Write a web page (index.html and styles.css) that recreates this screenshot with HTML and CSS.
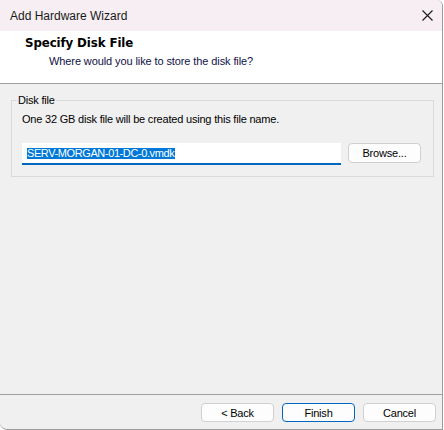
FILE: index.html
```html
<!DOCTYPE html>
<html>
<head>
<meta charset="utf-8">
<link rel="stylesheet" href="styles.css">
</head>
<body>
<div class="window">
  <div class="titlebar">
    <span class="title">Add Hardware Wizard</span>
    <svg class="close" width="11" height="11" viewBox="0 0 11 11"><path d="M0.5 0.5 L10.5 10.5 M10.5 0.5 L0.5 10.5" stroke="#1a1a1a" stroke-width="1.1" fill="none"/></svg>
  </div>
  <div class="header">
    <div class="h-title">Specify Disk File</div>
    <div class="h-sub">Where would you like to store the disk file?</div>
  </div>
  <div class="main">
    <fieldset class="group">
      <legend class="legend">Disk file</legend>
      <div class="desc">One 32 GB disk file will be created using this file name.</div>
      <div class="row">
        <div class="input"><span class="sel">SERV-MORGAN-01-DC-0.vmdk</span></div>
        <button class="btn browse">Browse...</button>
      </div>
    </fieldset>
  </div>
  <div class="footer">
    <button class="btn">&lt; Back</button>
    <button class="btn default">Finish</button>
    <button class="btn">Cancel</button>
  </div>
</div>
</body>
</html>
```

FILE: styles.css
```css
html, body {
  margin: 0;
  padding: 0;
  background: #ffffff;
}
body {
  font-family: "Liberation Sans", Arial, sans-serif;
  font-size: 11px;
  letter-spacing: -0.2px;
  color: #000;
}
.window {
  width: 442px;
  height: 429px;
  border-right: 1px solid #9c9c9c;
  border-bottom: 1px solid #9c9c9c;
  border-bottom-left-radius: 7px;
  border-top-right-radius: 6px;
  background: #f0f0f0;
  display: flex;
  flex-direction: column;
  overflow: hidden;
}
.titlebar {
  height: 31px;
  flex: none;
  background: #f6eef2;
  display: flex;
  align-items: center;
  justify-content: space-between;
  padding: 0 9px 0 10px;
}
.title {
  font-size: 12px;
  letter-spacing: 0;
  color: #1a1a1a;
  line-height: 16px;
  padding-top: 1px;
}
.close {
  display: block;
  margin-top: 0;
}
.header {
  height: 52px;
  flex: none;
  background: #ffffff;
  border-bottom: 1px solid #a0a0a0;
  padding-top: 4px;
  box-sizing: border-box;
  height: 53px;
}
.h-title {
  font-family: "DejaVu Sans", sans-serif;
  font-weight: bold;
  font-size: 11.8px;
  letter-spacing: -0.1px;
  line-height: 16px;
  padding-left: 25px;
}
.h-sub {
  line-height: 16px;
  padding-left: 49px;
  letter-spacing: -0.1px;
  color: #101048;
  margin-top: 2px;
}
.main {
  flex: 1;
}
.group {
  margin: 9px 8px 0 11px;
  padding: 0 10px 11px 10px;
  border: 1px solid #dadada;
  min-width: 0;
}
.legend {
  padding: 0 1px;
  margin-left: -5px;
  line-height: 14px;
}
.desc {
  line-height: 16px;
  padding-top: 4px;
}
.row {
  display: flex;
  align-items: flex-start;
  margin-top: 16px;
}
.input {
  width: 319px;
  height: 20px;
  background: #ffffff;
  border-bottom: 2px solid #0067c0;
  display: flex;
  align-items: center;
  padding-left: 5px;
  box-sizing: content-box;
  margin-right: 7px;
}
.input {
  width: 314px;
}
.sel {
  background: #0078d7;
  color: #ffffff;
  line-height: 11px;
  display: inline-block;
  letter-spacing: -0.4px;
  padding-right: 1px;
}
.btn {
  font-family: "Liberation Sans", Arial, sans-serif;
  font-size: 11px;
  letter-spacing: -0.2px;
  color: #000;
  background: #fdfdfd;
  border: 1px solid #d0d0d0;
  border-radius: 4px;
  height: 19px;
  width: 73px;
  padding: 0;
  margin: 0;
  line-height: 16px;
}
.browse {
  height: 20px;
}
.default {
  border-color: #0067c0;
}
.footer {
  flex: none;
  border-top: 1px solid #a0a0a0;
  padding: 8px 6px 7px 0;
  display: flex;
  justify-content: flex-end;
  gap: 8px;
}
```
